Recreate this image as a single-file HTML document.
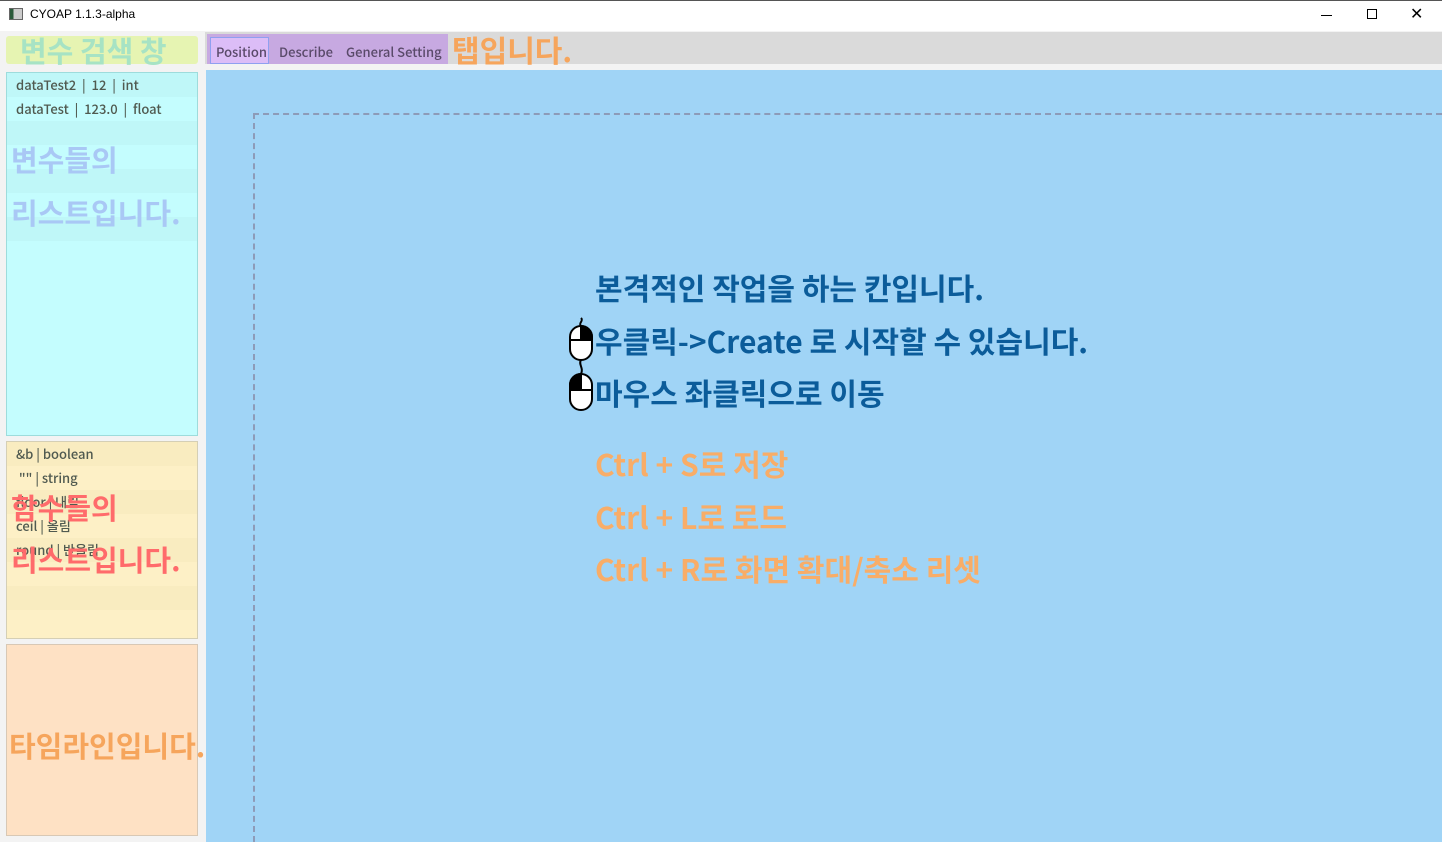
<!DOCTYPE html>
<html style="width:1442px;height:842px;overflow:hidden"><head><meta charset="utf-8"><style>
*{margin:0;padding:0;box-sizing:border-box}
body{width:1442px;height:842px;overflow:hidden;background:#f3f3f3;font-family:"Liberation Sans","Noto Sans CJK KR",sans-serif;position:relative}
.a{position:absolute}
.k{font-family:"Noto Sans CJK KR","Liberation Sans",sans-serif;font-weight:700;white-space:nowrap}
.m{font-size:30px;letter-spacing:0}
.row{height:24px;font-size:13px;color:#505a50;padding-left:9px;line-height:24px;font-family:"Noto Sans CJK KR","Liberation Sans",sans-serif;font-weight:500;white-space:nowrap}
</style></head><body>
<div class="a" style="left:0;top:0;width:1442px;height:31px;background:#fff;border-top:1px solid #555"></div>
<div class="a" style="left:9px;top:8px;width:14px;height:12px;border:1px solid #666;background:linear-gradient(90deg,#2b5a3a 30%,#ccc 30%)"></div>
<div class="a" style="left:30px;top:7px;font-size:12px;color:#000">CYOAP 1.1.3-alpha</div>
<div class="a" style="left:1321px;top:15px;width:11px;height:1px;background:#000"></div>
<div class="a" style="left:1367px;top:9px;width:10px;height:10px;border:1px solid #000"></div>
<div class="a" style="left:1410px;top:4px;font-size:16px;color:#000">✕</div>

<div class="a" style="left:6px;top:36px;width:192px;height:28px;background:#e6f4b2;border-radius:3px"></div>
<div class="a k" style="left:20px;top:29px;font-size:29px;color:#a7e3c4">변수 검색 창</div>

<div class="a" style="left:205px;top:32px;width:1237px;height:32px;background:#dadada"></div>
<div class="a" style="left:207px;top:34px;width:241px;height:30px;background:#c7a9e1"></div>
<div class="a" style="left:210px;top:37px;width:59px;height:27px;background:#dcbdf7;border:1px solid #8fa0f0"></div>
<div class="a" style="left:216px;top:42px;font-size:13px;color:#5a4a6a;font-family:'Noto Sans CJK KR',sans-serif;font-weight:500">Position</div>
<div class="a" style="left:279px;top:42px;font-size:13px;color:#5a4a6a;font-family:'Noto Sans CJK KR',sans-serif;font-weight:500">Describe</div>
<div class="a" style="left:346px;top:42px;font-size:13px;color:#5a4a6a;font-family:'Noto Sans CJK KR',sans-serif;font-weight:500">General Setting</div>
<div class="a k" style="left:452px;top:27px;font-size:30px;color:#f6a55c">탭입니다.</div>

<div class="a" style="left:206px;top:70px;width:1236px;height:772px;background:#a0d4f6;overflow:hidden">
<div class="a" style="left:47px;top:43px;width:1189px;height:729px;border-left:2px dashed #8d9bb8;border-top:2px dashed #8d9bb8"></div>
</div>

<div class="a" style="left:6px;top:72px;width:192px;height:364px;background:#c4fdfe;border:1px solid #9ddcdc">
<div class="row" style="background:#bff7f8">dataTest2 &nbsp;|&nbsp; 12 &nbsp;|&nbsp; int</div>
<div class="row">dataTest &nbsp;|&nbsp; 123.0 &nbsp;|&nbsp; float</div>
<div class="row" style="background:#bff7f8"></div><div class="row"></div><div class="row" style="background:#bff7f8"></div><div class="row"></div><div class="row" style="background:#bff7f8"></div><div class="row"></div>
</div>
<div class="a k" style="left:11px;top:138px;font-size:29px;color:#a9c8f5">변수들의</div>
<div class="a k" style="left:11px;top:191px;font-size:29px;color:#a9c8f5">리스트입니다.</div>

<div class="a" style="left:6px;top:441px;width:192px;height:198px;background:#fdf0c6;border:1px solid #d5cfb5">
<div class="row" style="background:#f9ecc0">&amp;b | boolean</div>
<div class="row">&nbsp;"" | string</div>
<div class="row" style="background:#f9ecc0">floor | 내림</div>
<div class="row">ceil | 올림</div>
<div class="row" style="background:#f9ecc0">round | 반올림</div>
<div class="row"></div><div class="row" style="background:#f9ecc0"></div>
</div>
<div class="a k" style="left:11px;top:486px;font-size:29px;color:#ff6b6b">함수들의</div>
<div class="a k" style="left:11px;top:538px;font-size:29px;color:#ff6b6b">리스트입니다.</div>

<div class="a" style="left:6px;top:644px;width:192px;height:192px;background:#fee1c4;border:1px solid #d8c8b5"></div>
<div class="a k" style="left:9px;top:724px;font-size:29px;color:#f6a55c">타임라인입니다.</div>

<div class="a k m" style="left:595px;top:265px;color:#0b5c9a">본격적인 작업을 하는 칸입니다.</div>
<div class="a k m" style="left:595px;top:318px;color:#0b5c9a">우클릭-&gt;Create 로 시작할 수 있습니다.</div>
<div class="a k m" style="left:595px;top:370px;color:#0b5c9a">마우스 좌클릭으로 이동</div>
<svg class="a" style="left:565px;top:316px" width="30" height="96" viewBox="0 0 30 96">
<g fill="#fff" stroke="#000" stroke-width="2">
<path d="M16 2c3 3-3 5 0 8" fill="none"/>
<rect x="5" y="10" width="22" height="34" rx="11"/>
<path d="M5 24h22M16 10v14"/>
<path d="M16 10a11 11 0 0 1 11 11v3h-11z" fill="#000"/>
<path d="M16 44c-3 4 3 8 0 14" fill="none"/>
<rect x="5" y="58" width="22" height="36" rx="11"/>
<path d="M5 74h22M16 58v16"/>
<path d="M16 58a11 11 0 0 0-11 11v5h11z" fill="#000"/>
</g></svg>
<div class="a k m" style="left:595px;top:441px;color:#f8ad68">Ctrl + S로 저장</div>
<div class="a k m" style="left:595px;top:494px;color:#f8ad68">Ctrl + L로 로드</div>
<div class="a k m" style="left:595px;top:546px;color:#f8ad68">Ctrl + R로 화면 확대/축소 리셋</div>
</body></html>
